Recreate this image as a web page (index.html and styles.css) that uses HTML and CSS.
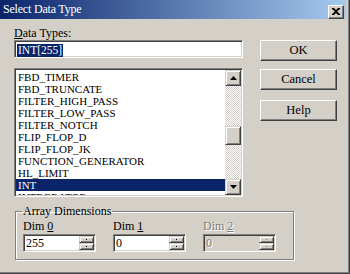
FILE: index.html
```html
<!DOCTYPE html>
<html lang="en">
<head>
  <meta charset="UTF-8" />
  <title>Select Data Type</title>
  <link rel="stylesheet" href="styles.css">
</head>
<body>
  <div class="dialog">
    <div class="titlebar">
      <span class="title">Select Data Type</span>
      <button class="close-btn" type="button">
        <svg viewBox="0 0 8 7" width="8" height="7">
          <path d="M0 0h2l2 2 2-2h2v1L5 3.5 8 6v1H6L4 5 2 7H0V6l3-2.5L0 1z" fill="#000"></path>
        </svg>
      </button>
    </div>

    <div class="content">
      <div class="left-col">
        <label class="field-label" for="dtype"><u>D</u>ata Types:</label>
        <div class="text-input">
          <span class="selected-text">INT[255]</span>
        </div>

        <div class="listbox">
          <ul class="list-items">
            <li>FBD_TIMER</li>
            <li>FBD_TRUNCATE</li>
            <li>FILTER_HIGH_PASS</li>
            <li>FILTER_LOW_PASS</li>
            <li>FILTER_NOTCH</li>
            <li>FLIP_FLOP_D</li>
            <li>FLIP_FLOP_JK</li>
            <li>FUNCTION_GENERATOR</li>
            <li>HL_LIMIT</li>
            <li class="selected">INT</li>
            <li class="partial">INTEGRATOR</li>
          </ul>
          <div class="scrollbar">
            <div class="scroll-btn">
              <svg viewBox="0 0 7 4" width="7" height="4"><path d="M3.5 0 7 4H0z" fill="#000"></path></svg>
            </div>
            <div class="scroll-track">
              <div class="scroll-thumb"></div>
            </div>
            <div class="scroll-btn">
              <svg viewBox="0 0 7 4" width="7" height="4"><path d="M0 0h7L3.5 4z" fill="#000"></path></svg>
            </div>
          </div>
        </div>
      </div>

      <div class="right-col">
        <button class="win-btn btn-ok" type="button">OK</button>
        <button class="win-btn btn-cancel" type="button">Cancel</button>
        <button class="win-btn btn-help" type="button">Help</button>
      </div>
    </div>

    <fieldset class="groupbox">
      <legend>Array Dimensions</legend>
      <div class="dims">
        <div class="dim">
          <div class="dim-label">Dim <u>0</u></div>
          <div class="spinner">
            <span class="spin-value">255</span>
            <div class="spin-btns"><div class="spin-half"><i></i></div><div class="spin-half"><i></i></div></div>
          </div>
        </div>
        <div class="dim">
          <div class="dim-label">Dim <u>1</u></div>
          <div class="spinner">
            <span class="spin-value">0</span>
            <div class="spin-btns"><div class="spin-half"><i></i></div><div class="spin-half"><i></i></div></div>
          </div>
        </div>
        <div class="dim disabled">
          <div class="dim-label">Dim <u>2</u></div>
          <div class="spinner">
            <span class="spin-value">0</span>
            <div class="spin-btns"><div class="spin-half"><i></i></div><div class="spin-half"><i></i></div></div>
          </div>
        </div>
      </div>
    </fieldset>
  </div>
</body>
</html>
```

FILE: styles.css
```css
* {
  margin: 0;
  padding: 0;
  box-sizing: border-box;
}

body {
  font-family: "Liberation Serif", "Times New Roman", "DejaVu Serif", serif;
  font-size: 12px;
  color: #000;
  background-color: #d4d0c8;
  width: 350px;
  height: 274px;
  overflow: hidden;
}

button {
  font-family: "Liberation Serif", "Times New Roman", "DejaVu Serif", serif;
}

.dialog {
  width: 350px;
  height: 274px;
  background-color: #d4d0c8;
  border-right: 1px solid #404040;
  border-bottom: 1px solid #404040;
  box-shadow: inset -1px -1px #808080;
  padding-right: 3px;
}

/* title bar */
.titlebar {
  height: 19px;
  background: linear-gradient(to right, #0a246a, #a6caf0);
  display: flex;
  align-items: center;
  justify-content: space-between;
  padding: 0 2px 0 3px;
}

.title {
  color: #fff;
  font-size: 12px;
  letter-spacing: -0.2px;
}

.close-btn {
  width: 16px;
  height: 14px;
  margin-top: 4px;
  background-color: #d4d0c8;
  border: 1px solid;
  border-color: #fff #404040 #404040 #fff;
  box-shadow: inset -1px -1px #808080;
  display: flex;
  align-items: center;
  justify-content: center;
}

/* main area */
.content {
  display: flex;
  padding-left: 14px;
}

.left-col {
  width: 229px;
}

.field-label {
  display: block;
  height: 14px;
  line-height: 14px;
  margin-top: 7px;
  font-size: 12px;
}

.text-input {
  height: 18px;
  background-color: #fff;
  border: 1px solid;
  border-color: #808080 #fff #fff #808080;
  box-shadow: inset 1px 1px #404040, inset -1px -1px #d4d0c8;
  padding: 2px 0 0 2px;
}

.selected-text {
  display: inline-block;
  background-color: #0a246a;
  color: #fff;
  height: 13px;
  line-height: 13px;
  font-size: 11.5px;
  padding: 0 1px;
}

.listbox {
  margin-top: 10px;
  height: 129px;
  display: flex;
  border: 1px solid;
  border-color: #808080 #fff #fff #808080;
  background-color: #fff;
  padding: 1px;
  box-shadow: inset 1px 1px #404040, inset -1px -1px #d4d0c8;
  overflow: hidden;
}

.list-items {
  list-style: none;
  flex: 1;
  overflow: hidden;
  padding-top: 1px;
}

.list-items li {
  height: 12px;
  line-height: 12px;
  font-size: 11px;
  padding-left: 2px;
  white-space: nowrap;
}

.list-items li.selected {
  background-color: #0a246a;
  color: #fff;
}

.list-items li.partial {
  height: 13px;
  line-height: 13px;
}

.scrollbar {
  width: 16px;
  display: flex;
  flex-direction: column;
}

.scroll-btn {
  height: 16px;
  background-color: #d4d0c8;
  border: 1px solid;
  border-color: #d4d0c8 #404040 #404040 #d4d0c8;
  box-shadow: inset 1px 1px #fff, inset -1px -1px #808080;
  display: flex;
  align-items: center;
  justify-content: center;
}

.scroll-track {
  flex: 1;
  background: repeating-conic-gradient(#d4d0c8 0 25%, #fff 0 50%) 0 0 / 2px 2px;
  padding-top: 40px;
}

.scroll-thumb {
  height: 19px;
  background-color: #d4d0c8;
  border: 1px solid;
  border-color: #d4d0c8 #404040 #404040 #d4d0c8;
  box-shadow: inset 1px 1px #fff, inset -1px -1px #808080;
}

/* buttons */
.right-col {
  display: flex;
  flex-direction: column;
  padding-left: 17px;
  padding-top: 21px;
}

.win-btn {
  width: 77px;
  height: 21px;
  font-size: 12.5px;
  background-color: #d4d0c8;
  border: 1px solid;
  border-color: #fff #404040 #404040 #fff;
  box-shadow: inset -1px -1px #808080;
  color: #000;
}

.btn-cancel {
  margin-top: 8px;
}

.btn-help {
  margin-top: 10px;
}

/* array dimensions */
.groupbox {
  margin: 8px 0 0 15px;
  width: 279px;
  height: 55px;
  border: 1px solid #808080;
  box-shadow: 1px 1px #fff, inset 1px 1px #fff;
  padding: 0 0 0 7px;
}

.groupbox legend {
  font-size: 12px;
  padding: 0 1px;
  margin-left: -1px;
  line-height: 12px;
}

.dims {
  display: flex;
  gap: 17px;
  margin-top: 2px;
}

.dim {
  width: 73px;
}

.dim-label {
  height: 14px;
  line-height: 14px;
  font-size: 12px;
}

.disabled .dim-label,
.disabled .spin-value {
  color: #808080;
  text-shadow: 1px 1px #fff;
}

.spinner {
  height: 18px;
  margin-top: 1px;
  display: flex;
  background-color: #fff;
  border: 1px solid;
  border-color: #808080 #fff #fff #808080;
  box-shadow: inset 1px 1px #404040, inset -1px -1px #d4d0c8;
  padding: 1px 1px 1px 2px;
}

.disabled .spinner {
  background-color: #d4d0c8;
}

.spin-value {
  flex: 1;
  font-size: 12px;
  line-height: 14px;
}

.spin-btns {
  width: 15px;
  display: flex;
  flex-direction: column;
}

.spin-half {
  flex: 1;
  background-color: #d4d0c8;
  border: 1px solid;
  border-color: #d4d0c8 #404040 #404040 #d4d0c8;
  box-shadow: inset 1px 1px #fff, inset -1px -1px #808080;
  display: flex;
  align-items: center;
  justify-content: center;
}

.spin-half i {
  width: 1px;
  height: 1px;
  background-color: #000;
}

.disabled .spin-half i {
  background-color: #808080;
}
```
